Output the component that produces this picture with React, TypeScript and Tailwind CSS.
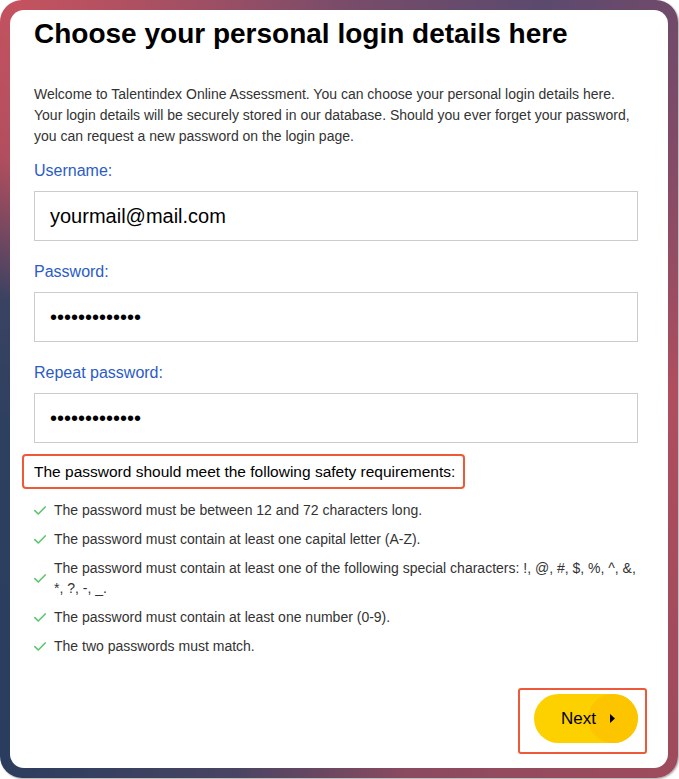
import React from "react";

function Check() {
  return (
    <svg width="12" height="9" viewBox="0 0 12 9" className="shrink-0">
      <polyline points="0.8,4.6 4.3,8 11.2,0.9" fill="none" stroke="#5ac46a" strokeWidth="1.5" strokeLinecap="round" strokeLinejoin="round" />
    </svg>
  );
}

const reqs: React.ReactNode[] = [
  "The password must be between 12 and 72 characters long.",
  "The password must contain at least one capital letter (A-Z).",
  <>
    The password must contain at least one of the following special characters: !, @, #, $, %, ^, &amp;,
    <br />
    *, ?, -, _.
  </>,
  "The password must contain at least one number (0-9).",
  "The two passwords must match.",
];

function Field({ label, value, first }: { label: string; value: string; first?: boolean }) {
  return (
    <div className={first ? "mt-[14px] flex flex-col" : "mt-[21px] flex flex-col"}>
      <div className="text-[16px] leading-[20px] text-[#2b5cc6]">{label}</div>
      <div className="mt-[10px] h-[50px] w-[604px] border border-[#cccccc] bg-white pl-[15px] flex items-center text-[20px] leading-[24px] text-black">
        {value}
      </div>
    </div>
  );
}

export default function App() {
  return (
    <div className="w-[679px] h-[779px] bg-white font-['Liberation_Sans',Arial,sans-serif]">
      <div className="w-[678px] h-[778px] rounded-[22px] p-[10px] shadow-[1px_1px_2px_rgba(0,0,0,0.35)] bg-[image:conic-gradient(from_0deg_at_50%_50%,#7a4c69_0deg,#5b4a6e_28deg,#7a4a68_48deg,#b04e5e_90deg,#a04b5c_135deg,#8a4a60_170deg,#4a4462_195deg,#2b3d5e_222deg,#2e4060_265deg,#3a4262_285deg,#b24e5e_305deg,#c4525f_320deg,#7a4c69_360deg)]">
        <div className="w-full h-full rounded-[14px] bg-white pl-[24px] pt-[7px] flex flex-col">
          <h1 className="text-[28px] leading-[34px] font-bold text-black">
            Choose your personal login details here
          </h1>
          <p className="mt-[33px] w-[604px] text-[14px] leading-[21px] text-[#333333]">
            Welcome to Talentindex Online Assessment. You can choose your personal login details here.
            <br />
            Your login details will be securely stored in our database. Should you ever forget your password,
            <br />
            you can request a new password on the login page.
          </p>

          <Field label="Username:" value="yourmail@mail.com" first />
          <Field label="Password:" value="•••••••••••••" />
          <Field label="Repeat password:" value="•••••••••••••" />

          <div className="mt-[11px] ml-[-12px] w-[443px] h-[35px] rounded-[4px] border-2 border-[#ee5a38] pl-[10px] flex items-center whitespace-nowrap text-[15.5px] leading-[20px] text-black">
            The password should meet the following safety requirements:
          </div>

          <ul className="mt-[11px] flex flex-col gap-[9px] w-[604px]">
            {reqs.map((r, i) => (
              <li key={i} className="flex items-center gap-[8px] text-[14px] leading-[20px] text-[#333333]">
                <Check />
                <span className="whitespace-nowrap">{r}</span>
              </li>
            ))}
          </ul>

          <div className="mt-[38px] w-[604px] flex justify-end">
            <div className="relative">
              <button className="relative h-[49px] w-[104px] rounded-full bg-[#fdd000] overflow-hidden flex items-center">
                <span className="absolute right-0 top-0 h-[49px] w-[50px] rounded-full bg-[#fcc500]" />
                <span className="relative ml-[27px] text-[17px] leading-[20px] text-black">Next</span>
                <svg width="5" height="9" viewBox="0 0 5 9" className="relative ml-[14px]">
                  <polygon points="0,0 5,4.5 0,9" fill="#000" />
                </svg>
              </button>
              <div className="absolute left-[-16px] top-[-6px] right-[-9px] bottom-[-11px] rounded-[3px] border-2 border-[#ee5a38] pointer-events-none" />
            </div>
          </div>
        </div>
      </div>
    </div>
  );
}
